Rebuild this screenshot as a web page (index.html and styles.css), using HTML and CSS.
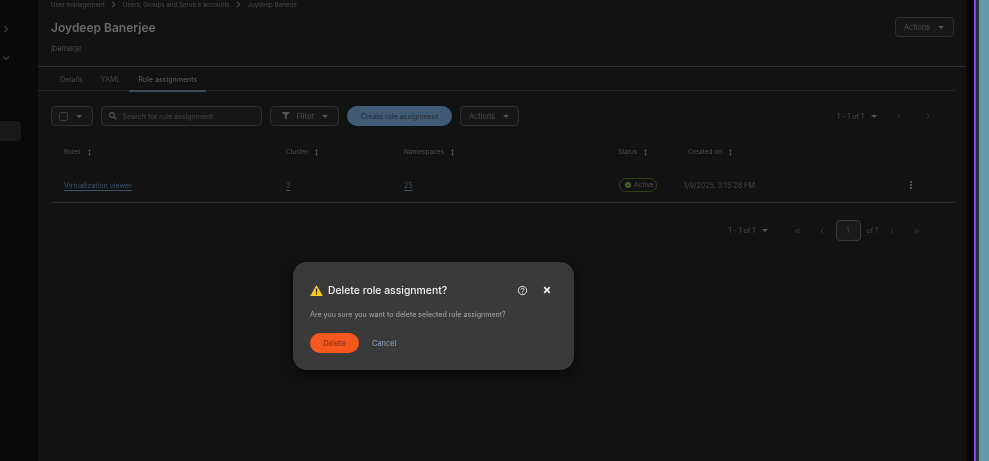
FILE: index.html
```html
<!DOCTYPE html>
<html lang="en">
<head>
<meta charset="utf-8">
<title>Joydeep Banerjee</title>
<link rel="stylesheet" href="styles.css">
</head>
<body>
<div class="app">
  <aside class="side">
    <svg class="side-chev first" viewBox="0 0 8 8"><path d="M2.500 1 5.500 4 2.500 7" /></svg>
    <svg class="side-chev second" viewBox="0 0 8 8"><path d="M1 2.500 4 5.500 7 2.500" /></svg>
    <div class="side-active"></div>
  </aside>
  <main class="main">
    <nav class="crumbs">
      <span>User management</span><svg class="crumb-sep" viewBox="0 0 8 8"><path d="M2.500 1 5.500 4 2.500 7" /></svg>
      <span>Users, Groups and Service accounts</span><svg class="crumb-sep" viewBox="0 0 8 8"><path d="M2.500 1 5.500 4 2.500 7" /></svg>
      <span>Joydeep Banerje</span>
    </nav>
    <header class="head">
      <div>
        <h1 class="title">Joydeep Banerjee</h1>
        <p class="sub">jbamerje</p>
      </div>
      <button class="btn head-actions">Actions<i class="caret"></i></button>
    </header>
    <div class="tabs">
      <span class="tab">Details</span>
      <span class="tab">YAML</span>
      <span class="tab active">Role assignments</span>
    </div>
    <section class="content">
      <div class="toolbar">
        <button class="btn check-btn"><i class="check"></i><i class="caret"></i></button>
        <div class="search">
          <svg class="ico" viewBox="0 0 512 512"><path d="M505 442.700 405.300 343c-4.500-4.500-10.600-7-17-7H372c27.600-35.300 44-79.700 44-128C416 93.100 322.900 0 208 0S0 93.100 0 208s93.100 208 208 208c48.300 0 92.700-16.400 128-44v16.300c0 6.400 2.500 12.500 7 17l99.700 99.700c9.400 9.400 24.600 9.400 33.900 0l28.300-28.300c9.400-9.400 9.400-24.600.1-34zM208 336c-70.700 0-128-57.200-128-128 0-70.700 57.200-128 128-128 70.700 0 128 57.200 128 128 0 70.700-57.200 128-128 128z"/></svg>
          <span>Search for role assignment</span>
        </div>
        <button class="btn filter-btn"><svg class="ico" viewBox="0 0 512 512"><path d="M20 0h472c18 0 27 21 14 34L320 220v252c0 16-18 26-32 17l-80-56c-5-4-8-10-8-17V220L6 34C-7 21 2 0 20 0z"/></svg>Filter<i class="caret"></i></button>
        <button class="primary">Create role assignment</button>
        <button class="btn actions-btn">Actions<i class="caret"></i></button>
        <div class="top-pager">
          <span class="count">1 - 1 of 1</span><i class="caret"></i>
          <svg class="pager-ico prev" viewBox="0 0 8 8"><path d="M5.500 1 2.500 4 5.500 7" /></svg>
          <svg class="pager-ico next" viewBox="0 0 8 8"><path d="M2.500 1 5.500 4 2.500 7" /></svg>
        </div>
      </div>
      <div class="grid header-row">
        <span class="th">Roles<svg class="sort" viewBox="0 0 6 10"><path d="M3 0 5.500 2.500H3.700V7.500H5.500L3 10 .5 7.500H2.300V2.500H.5z"/></svg></span>
        <span class="th">Cluster<svg class="sort" viewBox="0 0 6 10"><path d="M3 0 5.500 2.500H3.700V7.500H5.500L3 10 .5 7.500H2.300V2.500H.5z"/></svg></span>
        <span class="th">Namespaces<svg class="sort" viewBox="0 0 6 10"><path d="M3 0 5.500 2.500H3.700V7.500H5.500L3 10 .5 7.500H2.300V2.500H.5z"/></svg></span>
        <span class="th">Status<svg class="sort" viewBox="0 0 6 10"><path d="M3 0 5.500 2.500H3.700V7.500H5.500L3 10 .5 7.500H2.300V2.500H.5z"/></svg></span>
        <span class="th created">Created on<svg class="sort" viewBox="0 0 6 10"><path d="M3 0 5.500 2.500H3.700V7.500H5.500L3 10 .5 7.500H2.300V2.500H.5z"/></svg></span>
      </div>
      <div class="grid body-row">
        <a class="link">Virtualization viewer</a>
        <a class="link">3</a>
        <a class="link">25</a>
        <span class="status"><svg class="status-ico" viewBox="0 0 10 10"><circle cx="5" cy="5" r="5"/><path d="M2.700 5.100 4.400 6.800 7.400 3.500"/></svg>Active</span>
        <span class="date">1/9/2025, 3:15:28 PM</span>
        <span class="kebab"><i></i><i></i><i></i></span>
      </div>
      <div class="bottom-pager">
        <span class="count">1 - 1 of 1</span><i class="caret"></i>
        <span class="pg first-pg"><svg class="pg-ico" viewBox="0 0 8 8"><path d="M3.500 1 .5 4 3.500 7M7 1 4 4 7 7"/></svg></span>
        <span class="pg"><svg class="pg-ico" viewBox="0 0 8 8"><path d="M5.500 1 2.500 4 5.500 7"/></svg></span>
        <span class="page-input">1</span>
        <span class="of">of 1</span>
        <span class="pg"><svg class="pg-ico" viewBox="0 0 8 8"><path d="M2.500 1 5.500 4 2.500 7"/></svg></span>
        <span class="pg"><svg class="pg-ico" viewBox="0 0 8 8"><path d="M1 1 4 4 1 7M4.500 1 7.500 4 4.500 7"/></svg></span>
      </div>
    </section>
  </main>
  <div class="edge"><i class="edge-purple"></i><i class="edge-dark"></i><i class="edge-teal"></i></div>
  <div class="modal">
    <div class="modal-head">
      <svg class="warn" viewBox="0 0 16 14"><path d="M8 0 16 14H0z"/><rect class="warn-mark" x="7.100" y="4.500" width="1.800" height="5"/><rect class="warn-mark" x="7.100" y="10.400" width="1.800" height="1.800"/></svg>
      <h2 class="modal-title">Delete role assignment?</h2>
      <svg class="help" viewBox="0 0 10 10"><circle cx="5" cy="5" r="3.800"/><path d="M3.700 4.100C3.700 2.500 6.400 2.500 6.400 4.100 6.400 5.100 5 5.100 5 6.100"/><path d="M5 6.900V7.700"/></svg>
      <svg class="close" viewBox="0 0 10 10"><path d="M2.200 2.200 7.800 7.800M7.800 2.200 2.200 7.800"/></svg>
    </div>
    <p class="modal-text">Are you sure you want to delete selected role assignment?</p>
    <div class="modal-actions">
      <button class="danger">Delete</button>
      <button class="cancel">Cancel</button>
    </div>
  </div>
</div>
</body>
</html>
```

FILE: styles.css
```css
* { box-sizing: border-box; }
html, body { margin: 0; height: 100%; overflow: hidden; background: #121212; }
body { font-family: "Inter", "Liberation Sans", sans-serif; }
.app { position: relative; display: flex; width: 989px; height: 461px; overflow: hidden; }
.side { width: 38px; flex: none; background: #090909; display: flex; flex-direction: column; align-items: flex-end; filter: blur(0.4px); }
.side-chev { width: 8px; height: 8px; fill: none; stroke: #3c3c3c; stroke-width: 1.3; margin-right: 28px; }
.side-chev.first { margin-top: 25px; }
.side-chev.second { margin-top: 21px; }
.side-active { width: 21px; height: 20px; margin: 59px 17px 0 0; background: #191919; border-radius: 0 4px 4px 0; }
.main { width: 928px; flex: none; background: #121212; filter: blur(0.4px); }
.crumbs { display: flex; align-items: center; height: 8px; padding-left: 13px; font-size: 6.200px; color: #4a4a4a; white-space: nowrap; }
.crumb-sep { width: 7px; height: 7px; margin: 0 5.500px; fill: none; stroke: #4a4a4a; stroke-width: 1.300; }
.head { display: flex; justify-content: space-between; align-items: flex-start; height: 59px; padding: 10px 12px 0 13px; border-bottom: 1px solid #2f2f2f; }
.title { margin: 0; font-size: 12px; line-height: 20px; font-weight: 600; color: #6a6a6a; }
.sub { margin: 6px 0 0; font-size: 7.400px; line-height: 10px; color: #4c4c4c; }
.btn { display: flex; align-items: center; height: 20px; background: #171717; border: 1px solid #2f2f2f; border-radius: 4px; color: #4e4e4e; font: inherit; font-size: 7.400px; padding: 0 8px; }
.caret { display: inline-block; width: 0; height: 0; margin-left: 8px; border: 3px solid transparent; border-top: 3px solid #575757; border-bottom: 0; }
.head-actions { width: 59px; margin-top: -1px; }
.tabs { display: flex; width: 917px; height: 24px; padding-top: 1px; border-bottom: 1px solid #262626; font-size: 7.100px; color: #454545; }
.tab { display: flex; align-items: center; padding: 0 9px; }
.tab:first-child { padding-left: 22px; }
.tab.active { color: #606060; border-bottom: 2px solid #3d4954; height: 24px; padding-top: 1px; }
.content { width: 917px; padding: 15px 0 0 13px; }
.toolbar { display: flex; align-items: center; height: 20px; }
.check-btn { width: 42px; margin-right: 8px; padding-left: 7px; }
.check { width: 9px; height: 9px; border: 1px solid #393939; border-radius: 2px; }
.search { display: flex; align-items: center; width: 161px; height: 20px; margin-right: 8px; padding-left: 7px; background: #171717; border: 1px solid #2f2f2f; border-radius: 4px; color: #444; font-size: 7.100px; }
.ico { width: 7.500px; height: 7.500px; margin-right: 6px; fill: #555; }
.filter-btn { width: 69px; margin-right: 8px; padding-left: 11px; }
.filter-btn .ico { margin-right: 7px; }
.primary { width: 105px; height: 20px; margin-right: 8px; background: #415a75; border: 0; border-radius: 10px; color: #1f2a36; font: inherit; font-size: 7.100px; padding: 0; }
.actions-btn { width: 59px; }
.top-pager { display: flex; align-items: center; margin-left: 318px; color: #4e4e4e; font-size: 7.100px; white-space: nowrap; }
.top-pager .caret { margin-left: 7px; }
.pager-ico { width: 6px; height: 6px; fill: none; stroke: #333; stroke-width: 1.300; }
.pager-ico.prev { margin-left: 19px; }
.pager-ico.next { margin-left: 23px; }
.grid { display: grid; grid-template-columns: 222px 118px 214px 70px 221px 14px; padding-left: 13px; }
.header-row { align-items: center; height: 32px; margin-top: 10px; }
.th { display: flex; align-items: center; font-size: 6.500px; color: #515151; }
.created { grid-column: 5; }
.sort { width: 5px; height: 7px; margin-left: 6px; fill: #4c4c4c; }
.body-row { align-items: center; height: 35px; border-bottom: 1px solid #2a2a2a; font-size: 7.100px; }
.link { justify-self: start; color: #3f5266; text-decoration: underline; text-underline-offset: 2px; }
.status { justify-self: start; display: flex; align-items: center; width: 38px; height: 14px; margin-left: 1px; padding-left: 5px; border: 1px solid #2d4018; border-radius: 7px; color: #505050; font-size: 6.700px; white-space: nowrap; }
.status-ico { flex: none; width: 6px; height: 6px; margin-right: 3px; }
.status-ico circle { fill: #45682a; }
.status-ico path { fill: none; stroke: #151515; stroke-width: 1.500; }
.date { color: #484848; font-size: 7.100px; white-space: nowrap; margin-left: -4px; }
.kebab { display: flex; flex-direction: column; gap: 1px; align-items: center; width: 4px; }
.kebab i { width: 2px; height: 2px; background: #6a6a6a; border-radius: 50%; }
.bottom-pager { display: flex; align-items: center; justify-content: flex-end; height: 21px; margin-top: 17px; padding-right: 27px; color: #4e4e4e; font-size: 7.100px; }
.bottom-pager .caret { margin-left: 7px; }
.pg { display: flex; justify-content: center; width: 24px; }
.pg-ico { width: 6px; height: 6px; fill: none; stroke: #3a3a3a; stroke-width: 1.300; }
.first-pg { margin-left: 18px; }
.page-input { display: flex; align-items: center; width: 25px; height: 21px; margin-left: 2px; padding-left: 9px; border: 1px solid #3a3a3a; border-radius: 4px; background: #1a1a1a; color: #484848; }
.of { margin: 0 2px 0 5px; color: #484848; }
.edge { flex: 1; display: flex; background: #060606; padding-left: 8px; }
.edge i { display: block; height: 100%; }
.edge-purple { width: 2px; background: #8a3ff0; }
.edge-dark { width: 3px; background: #26343a; }
.edge-teal { flex: 1; background: #669aa6; }
.modal { position: absolute; left: 293px; top: 262px; width: 281px; height: 108px; padding: 19px 22px 0 17px; background: #3a3a3a; border-radius: 14px; box-shadow: 0 4px 14px rgba(0, 0, 0, .5); filter: blur(0.35px); }
.modal-head { display: flex; align-items: center; height: 18px; }
.warn { width: 13px; height: 11px; margin-right: 5px; fill: #ffcc17; }
.warn-mark { fill: #2b2b2b; }
.modal-title { flex: 1; margin: 0; font-size: 10.400px; font-weight: 500; color: #f0f0f0; white-space: nowrap; }
.help { width: 11px; height: 11px; margin-right: 14.500px; fill: none; stroke: #e0e0e0; stroke-width: .9; }
.close { width: 10px; height: 10px; fill: none; stroke: #f0f0f0; stroke-width: 1.700; }
.modal-text { margin: 10px 0 0; font-size: 7.100px; line-height: 11px; color: #a8a8a8; white-space: nowrap; }
.modal-actions { display: flex; align-items: center; gap: 13px; margin-top: 13px; }
.danger { width: 49px; height: 20px; border: 0; border-radius: 10px; background: #f4581c; color: #7c2f12; font: inherit; font-size: 7.500px; padding: 0; }
.cancel { background: none; border: 0; padding: 0; color: #8fa6c0; font: inherit; font-size: 7.400px; }
```
